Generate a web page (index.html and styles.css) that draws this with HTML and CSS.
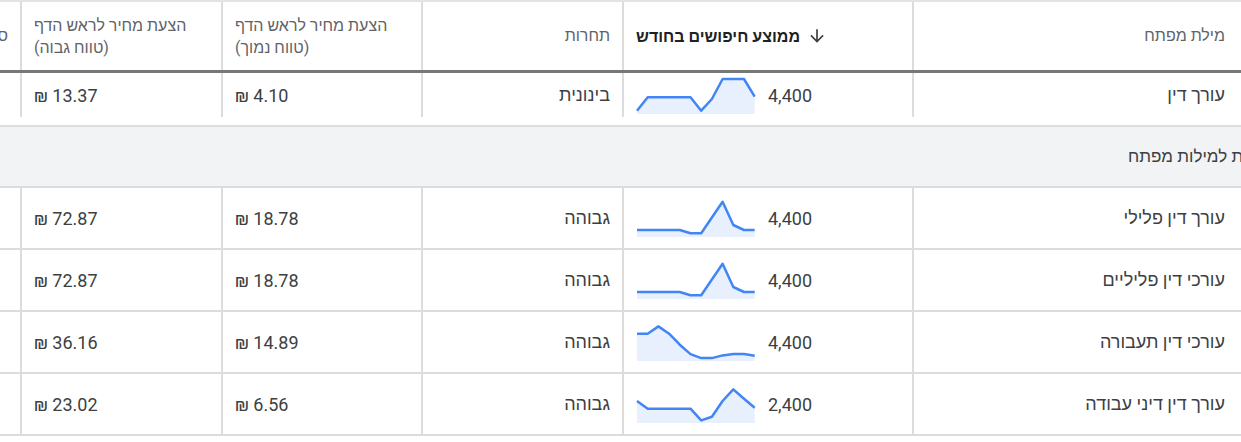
FILE: index.html
```html
<!DOCTYPE html>
<html lang="he">
<head>
    <meta charset="UTF-8">
    <meta name="viewport" content="width=device-width, initial-scale=1.0">
    <title>מתכנן מילות מפתח</title>
    <link rel="stylesheet" href="styles.css">
</head>
<body>

    <div class="viewport">
        <div class="table" dir="rtl">

            <div class="row head">
                <div class="cell check"></div>
                <div class="cell kw">מילת מפתח</div>
                <div class="cell end sorted">
                    <svg class="arrow" viewBox="0 0 24 24" width="20" height="20"><path d="M20 12l-1.41-1.41L13 16.17V4h-2v12.17l-5.58-5.59L4 12l8 8 8-8z"/></svg>
                    <span>ממוצע חיפושים בחודש</span>
                </div>
                <div class="cell">תחרות</div>
                <div class="cell end"><span>הצעת מחיר לראש הדף<br>(טווח נמוך)</span></div>
                <div class="cell end"><span>הצעת מחיר לראש הדף<br>(טווח גבוה)</span></div>
                <div class="cell">סטטוס החשבון</div>
            </div>

            <!-- keyword you entered -->
            <div class="row first">
                <div class="cell check"></div>
                <div class="cell kw">עורך דין</div>
                <div class="cell end searches">
                    <span>4,400</span>
                    <svg class="spark" viewBox="0 0 120 37" width="120" height="37">
                        <polygon points="1,33.7 11.7,20.3 22.4,20.3 33.1,20.3 43.8,20.3 54.5,20.3 65.2,33.7 75.9,22 86.6,2 97.3,2 108,2 118.7,19.7 118.7,37 1,37"/>
                        <polyline points="1,33.7 11.7,20.3 22.4,20.3 33.1,20.3 43.8,20.3 54.5,20.3 65.2,33.7 75.9,22 86.6,2 97.3,2 108,2 118.7,19.7"/>
                    </svg>
                </div>
                <div class="cell">בינונית</div>
                <div class="cell end">4.10 ₪</div>
                <div class="cell end">13.37 ₪</div>
                <div class="cell"></div>
            </div>

            <div class="group">רעיונות למילות מפתח</div>

            <div class="row">
                <div class="cell check"></div>
                <div class="cell kw">עורך דין פלילי</div>
                <div class="cell end searches">
                    <span>4,400</span>
                    <svg class="spark" viewBox="0 0 120 37" width="120" height="37">
                        <polygon points="1,30 11.7,30 22.4,30 33.1,30 43.8,30 54.5,33.3 65.2,33.3 75.9,17.5 86.6,1.7 97.3,25 108,30 118.7,30 118.7,37 1,37"/>
                        <polyline points="1,30 11.7,30 22.4,30 33.1,30 43.8,30 54.5,33.3 65.2,33.3 75.9,17.5 86.6,1.7 97.3,25 108,30 118.7,30"/>
                    </svg>
                </div>
                <div class="cell">גבוהה</div>
                <div class="cell end">18.78 ₪</div>
                <div class="cell end">72.87 ₪</div>
                <div class="cell"></div>
            </div>

            <div class="row">
                <div class="cell check"></div>
                <div class="cell kw">עורכי דין פליליים</div>
                <div class="cell end searches">
                    <span>4,400</span>
                    <svg class="spark" viewBox="0 0 120 37" width="120" height="37">
                        <polygon points="1,30 11.7,30 22.4,30 33.1,30 43.8,30 54.5,33.3 65.2,33.3 75.9,17.5 86.6,1.7 97.3,25 108,30 118.7,30 118.7,37 1,37"/>
                        <polyline points="1,30 11.7,30 22.4,30 33.1,30 43.8,30 54.5,33.3 65.2,33.3 75.9,17.5 86.6,1.7 97.3,25 108,30 118.7,30"/>
                    </svg>
                </div>
                <div class="cell">גבוהה</div>
                <div class="cell end">18.78 ₪</div>
                <div class="cell end">72.87 ₪</div>
                <div class="cell"></div>
            </div>

            <div class="row">
                <div class="cell check"></div>
                <div class="cell kw">עורכי דין תעבורה</div>
                <div class="cell end searches">
                    <span>4,400</span>
                    <svg class="spark" viewBox="0 0 120 37" width="120" height="37">
                        <polygon points="1,9.7 11.7,9.7 22.4,2.4 33.1,9.7 43.8,20.7 54.5,30.1 65.2,34.1 75.9,34.1 86.6,31.4 97.3,30.1 108,30.1 118.7,31.7 118.7,37 1,37"/>
                        <polyline points="1,9.7 11.7,9.7 22.4,2.4 33.1,9.7 43.8,20.7 54.5,30.1 65.2,34.1 75.9,34.1 86.6,31.4 97.3,30.1 108,30.1 118.7,31.7"/>
                    </svg>
                </div>
                <div class="cell">גבוהה</div>
                <div class="cell end">14.89 ₪</div>
                <div class="cell end">36.16 ₪</div>
                <div class="cell"></div>
            </div>

            <div class="row">
                <div class="cell check"></div>
                <div class="cell kw">עורך דין דיני עבודה</div>
                <div class="cell end searches">
                    <span>2,400</span>
                    <svg class="spark" viewBox="0 0 120 37" width="120" height="37">
                        <polygon points="1,15 11.7,22.7 22.4,22.7 33.1,22.7 43.8,22.7 54.5,22.7 65.2,34.4 75.9,30.7 86.6,15 97.3,3.4 108,12.7 118.7,21.7 118.7,37 1,37"/>
                        <polyline points="1,15 11.7,22.7 22.4,22.7 33.1,22.7 43.8,22.7 54.5,22.7 65.2,34.4 75.9,30.7 86.6,15 97.3,3.4 108,12.7 118.7,21.7"/>
                    </svg>
                </div>
                <div class="cell">גבוהה</div>
                <div class="cell end">6.56 ₪</div>
                <div class="cell end">23.02 ₪</div>
                <div class="cell"></div>
            </div>

        </div>
    </div>

</body>
</html>
```

FILE: styles.css
```css
* {
    box-sizing: border-box;
}
body {
    font-family: Roboto, "Liberation Sans", Arial, sans-serif;
    background-color: #fff;
    color: #3c4043;
    margin: 0;
    padding: 0;
}
.viewport {
    height: 100vh;
    overflow: hidden;
}
/* wider than the window: the checkbox column and the status column are cut off */
.table {
    direction: rtl;
    width: 1489px;
    margin-left: -180px;
    border-top: 2px solid #e3e3e3;
}
.row {
    display: grid;
    grid-template-columns: 64px 333px 290px 201px 200px 201px 200px;
    height: 62px;
    border-bottom: 2px solid #dcdcdc;
    font-size: 18px;
}
.cell {
    display: flex;
    align-items: center;
    gap: 12px;
    padding: 0 12px;
    border-left: 2px solid #dcdcdc;
    white-space: nowrap;
}
.cell.end {
    justify-content: flex-end;
    text-align: left;
}
.cell.kw {
    padding-right: 20px;
}
.head {
    height: 71px;
    border-bottom: 3px solid #777;
    font-size: 16px;
    line-height: 22px;
    color: #5f6368;
}
.head .cell span {
    padding-top: 2px;
}
.sorted {
    color: #202124;
    font-weight: bold;
}
.head .sorted {
    gap: 7px;
}
.sorted .arrow {
    fill: #3c4043;
}
.first {
    height: 54px;
    padding-bottom: 8px;
}
.group {
    display: flex;
    align-items: center;
    height: 61px;
    padding-right: 27px;
    background-color: #f1f3f4;
    border-bottom: 2px solid #dcdcdc;
    font-size: 17px;
    color: #3c4043;
    white-space: nowrap;
}
.spark {
    display: block;
}
.spark polygon {
    fill: #e8f0fe;
}
.spark polyline {
    fill: none;
    stroke: #4285f4;
    stroke-width: 2.5;
    stroke-linejoin: round;
}
```
